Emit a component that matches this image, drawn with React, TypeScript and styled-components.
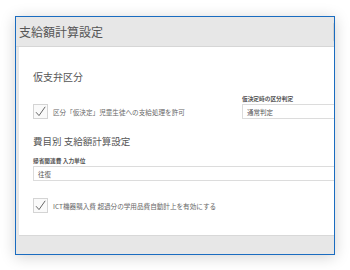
import React from "react";
import styled, { createGlobalStyle } from "styled-components";

const Global = createGlobalStyle`
  html, body { margin: 0; padding: 0; background: #ffffff; }
  body { font-family: "Noto Sans CJK JP", "Noto Sans", sans-serif; }
  * { box-sizing: border-box; }
`;

const Page = styled.div`
  width: 350px;
  height: 270px;
  padding: 16px 0 0 15px;
  overflow: hidden;
`;

const Window = styled.div`
  width: 320px;
  height: 239px;
  border: 1px solid #1a6cc0;
  background: #e7e7e7;
  box-shadow: 0 2px 14px rgba(0, 0, 0, 0.18);
  display: flex;
  flex-direction: column;
  overflow: hidden;
`;

const TitleBar = styled.div`
  height: 30px;
  flex: none;
  display: flex;
  align-items: center;
  justify-content: space-between;
  padding-left: 3px;
  border-bottom: 1px solid #d6d6d6;
`;

const Title = styled.span`
  font-size: 12px;
  color: #555;
`;

const CornerButton = styled.div`
  width: 30px;
  height: 20px;
  margin-right: -29px;
  background: #fff;
  border: 1px solid #d0d0d0;
  border-radius: 2px;
`;

const Panel = styled.div`
  flex: 1;
  margin-left: 3px;
  background: #fff;
  border-bottom: 1px solid #d8d8d8;
  padding: 24px 0 0 14px;
  overflow: hidden;
`;

const Footer = styled.div`
  height: 18px;
  flex: none;
`;

const Heading = styled.div<{ $size: number }>`
  font-size: ${(p) => p.$size}px;
  line-height: 12px;
  color: #555;
`;

const Row = styled.div`
  display: grid;
  grid-template-columns: 209px 1fr;
  align-items: end;
  margin-top: 12px;
`;

const CheckRow = styled.label<{ $mt?: number }>`
  display: flex;
  align-items: center;
  gap: 5px;
  margin-top: ${(p) => p.$mt ?? 0}px;
`;

const Box = styled.span`
  width: 15px;
  height: 15px;
  flex: none;
  border: 1px solid #d4d4d4;
  background: #fafafa;
  display: flex;
  align-items: center;
  justify-content: center;
`;

const CheckLabel = styled.span`
  font-size: 6.6px;
  color: #666;
  white-space: nowrap;
`;

const Field = styled.div<{ $mt?: number }>`
  display: flex;
  flex-direction: column;
  gap: 2px;
  margin-top: ${(p) => p.$mt ?? 0}px;
`;

const FieldLabel = styled.span`
  font-size: 5.7px;
  line-height: 7px;
  color: #555;
  font-weight: 700;
  white-space: nowrap;
`;

const Select = styled.div<{ $w: number }>`
  width: ${(p) => p.$w}px;
  height: 15px;
  border: 1px solid #dcdcdc;
  background: #fff;
  font-size: 6.5px;
  color: #555;
  padding-left: 4px;
  display: flex;
  align-items: center;
  flex: none;
`;

const Section = styled.div`
  margin-top: 16px;
  display: flex;
  flex-direction: column;
`;

const Check = () => (
  <Box>
    <svg width="13" height="13" viewBox="0 0 13 13">
      <path d="M2 7.2 L5 10.6 L11.2 1.8" fill="none" stroke="#666" strokeWidth="1" />
    </svg>
  </Box>
);

export default function App() {
  return (
    <>
      <Global />
      <Page>
        <Window>
          <TitleBar>
            <Title>支給額計算設定</Title>
            <CornerButton />
          </TitleBar>
          <Panel>
            <Heading $size={10}>仮支弁区分</Heading>
            <Row>
              <CheckRow>
                <Check />
                <CheckLabel>区分「仮決定」児童生徒への支給処理を許可</CheckLabel>
              </CheckRow>
              <Field>
                <FieldLabel>仮決定時の区分判定</FieldLabel>
                <Select $w={100}>通常判定</Select>
              </Field>
            </Row>
            <Section>
              <Heading $size={9.5}>費目別 支給額計算設定</Heading>
              <Field $mt={10}>
                <FieldLabel>帰省関連費 入力単位</FieldLabel>
                <Select $w={310}>往復</Select>
              </Field>
              <CheckRow $mt={17}>
                <Check />
                <CheckLabel>ICT機器購入費 超過分の学用品費自動計上を有効にする</CheckLabel>
              </CheckRow>
            </Section>
          </Panel>
          <Footer />
        </Window>
      </Page>
    </>
  );
}
